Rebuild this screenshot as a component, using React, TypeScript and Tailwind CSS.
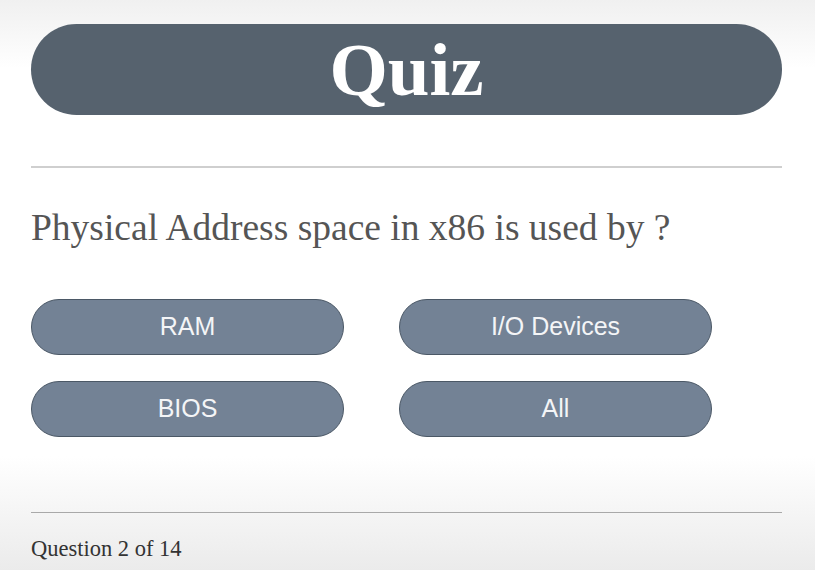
import React from 'react';

const options = ['RAM', 'I/O Devices', 'BIOS', 'All'];

const OptionButton = ({ label }: { label: string }) => (
  <button className="h-[56px] w-[313px] rounded-full border border-[#4b5866] bg-[#738295] text-[25px] text-[#f4f5f7] font-['Liberation_Sans',Arial,sans-serif]">
    {label}
  </button>
);

export default function App() {
  return (
    <div className="h-[570px] w-[815px] overflow-hidden bg-[linear-gradient(to_bottom,#f0f0f0_0%,#ffffff_12%,#ffffff_80%,#ebebeb_100%)] px-[31px] pt-[24px] font-['Liberation_Serif','Times_New_Roman',serif]">
      {/* Header */}
      <div className="flex h-[91px] w-[751px] items-center justify-center rounded-full bg-[#56626e]">
        <h1 className="text-[75px] font-bold leading-none text-white">Quiz</h1>
      </div>

      <div className="mt-[51px] h-[2px] w-[751px] bg-[#cfcfcf]"></div>

      {/* Question */}
      <p className="mt-[41px] text-[37.5px] leading-[38px] text-[#555555]">
        Physical Address space in x86 is used by ?
      </p>

      <div className="mt-[52px] grid grid-cols-[313px_313px] gap-x-[55px] gap-y-[26px]">
        {options.map((o) => (
          <OptionButton key={o} label={o} />
        ))}
      </div>

      <div className="mt-[75px] h-px w-[751px] bg-[#a9a9a9]"></div>

      <p className="mt-[25px] text-[22.5px] leading-[22.5px] text-[#333333]">Question 2 of 14</p>
    </div>
  );
}
